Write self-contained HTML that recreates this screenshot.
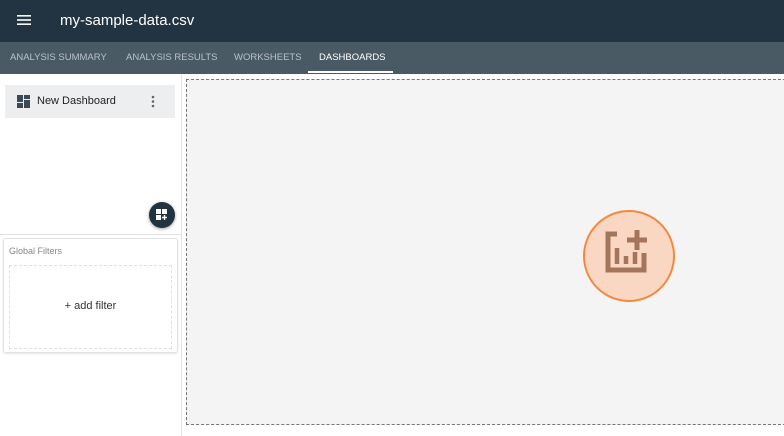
<!DOCTYPE html>
<html><head><style>
*{box-sizing:border-box;margin:0;padding:0}
body{width:784px;height:436px;overflow:hidden;font-family:"Liberation Sans",sans-serif;background:#fff;position:relative}
.hdr{position:absolute;left:0;top:0;width:784px;height:42px;background:#223341}
.title{position:absolute;left:60px;top:12px;color:#fff;font-size:15px}
.tabs{position:absolute;left:0;top:42px;width:784px;height:32px;background:#4a5a65}
.tab{position:absolute;top:10px;font-size:9.5px;color:#b9c2c8;letter-spacing:0}
.side{position:absolute;left:0;top:74px;width:182px;height:362px;border-right:1px solid #e3e3e3}
.item{position:absolute;left:5px;top:11px;width:170px;height:33px;background:#eceef0}
.canvas{position:absolute;left:186px;top:79px;width:600px;height:346px;background:#f4f4f4;border:1px dashed #777}
</style></head><body>
<div class="hdr">
<svg style="position:absolute;left:17px;top:14px" width="14" height="12"><rect y="1" width="14" height="1.6" fill="#fff"/><rect y="5.2" width="14" height="1.6" fill="#fff"/><rect y="9.4" width="14" height="1.6" fill="#fff"/></svg>
<div class="title">my-sample-data.csv</div></div>
<div class="tabs">
<div class="tab" style="left:10px">ANALYSIS SUMMARY</div>
<div class="tab" style="left:126px">ANALYSIS RESULTS</div>
<div class="tab" style="left:234px">WORKSHEETS</div>
<div class="tab" style="left:319px;color:#fff">DASHBOARDS</div>
<div style="position:absolute;left:308px;top:29px;width:85px;height:2px;background:#fff"></div>
</div>
<div class="side">
<div class="item">
<svg style="position:absolute;left:12px;top:10px" width="13" height="13"><rect x="0" y="0" width="6" height="7" fill="#3c4a55"/><rect x="7" y="0" width="6" height="4" fill="#3c4a55"/><rect x="0" y="8" width="6" height="5" fill="#3c4a55"/><rect x="7" y="5" width="6" height="8" fill="#3c4a55"/></svg>
<div style="position:absolute;left:32px;top:10px;font-size:11px;color:#222">New Dashboard</div>
<svg style="position:absolute;left:146px;top:10px" width="4" height="13"><circle cx="2" cy="2" r="1.3" fill="#666"/><circle cx="2" cy="6.5" r="1.3" fill="#666"/><circle cx="2" cy="11" r="1.3" fill="#666"/></svg>
</div>
<div style="position:absolute;left:149px;top:128px;width:26px;height:26px;border-radius:50%;background:#1f3341;box-shadow:0 1px 3px rgba(0,0,0,.4)">
<svg style="position:absolute;left:7px;top:7px" width="12" height="12"><rect x="0" y="0" width="5" height="5" fill="#fff"/><rect x="6" y="0" width="5" height="5" fill="#fff"/><rect x="0" y="6" width="5" height="5" fill="#fff"/><path d="M8.5 6v5M6 8.5h5" stroke="#fff" stroke-width="1.4"/></svg></div>
<div style="position:absolute;left:0;top:160px;width:181px;height:1px;background:#e0e0e0"></div>
<div style="position:absolute;left:3px;top:164px;width:175px;height:115px;border:1px solid #e2e2e2;border-radius:3px;box-shadow:0 1px 2px rgba(0,0,0,.1)">
<div style="position:absolute;left:5px;top:7px;font-size:9px;color:#888">Global Filters</div>
<div style="position:absolute;left:5px;top:26px;width:163px;height:84px;border:1px dashed #e0e0e0"></div>
<div style="position:absolute;left:0;width:100%;top:61px;text-align:center;font-size:11px;color:#333">+ add filter</div>
</div>
</div>
<div class="canvas">
<div style="position:absolute;left:396px;top:130px;width:92px;height:92px;border-radius:50%;background:#fad7c2;border:2px solid #f4883c"></div>
<svg style="position:absolute;left:416px;top:149px" width="46" height="46" viewBox="0 0 46 46"><path d="M14 5H5v36h36V24" fill="none" stroke="#a5745c" stroke-width="5"/><path d="M34 1v20M24 11h20" stroke="#a5745c" stroke-width="5"/><path d="M14 19v16M23 27v8M32 23v12" stroke="#a5745c" stroke-width="4.5"/></svg>
</div>
</body></html>
